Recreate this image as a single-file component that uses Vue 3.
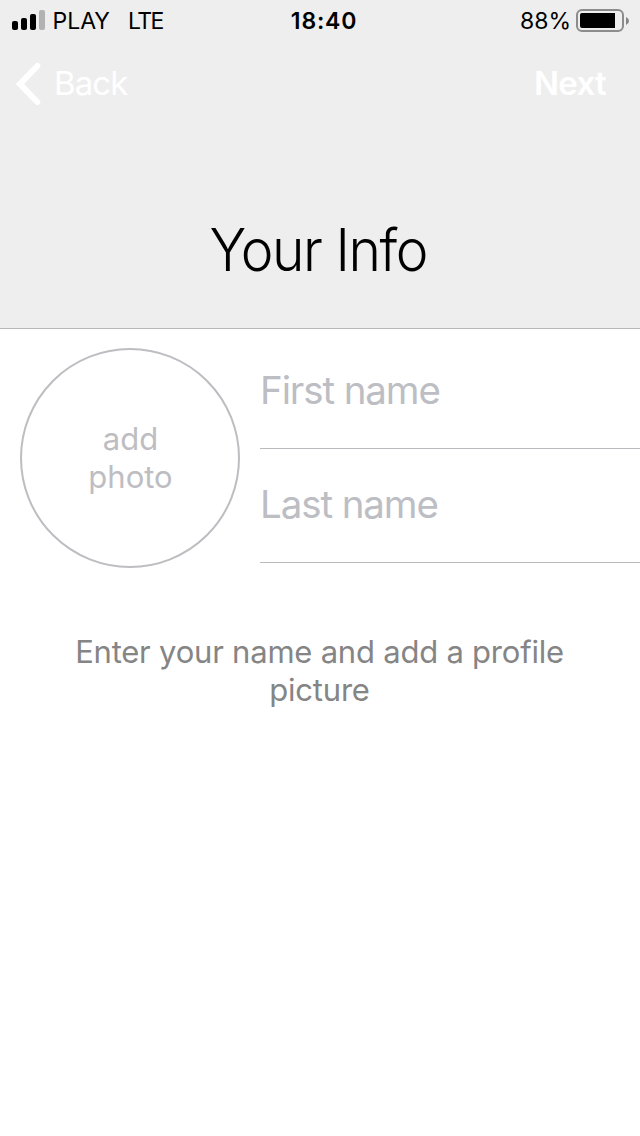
<script setup>
import { ref, computed } from "vue";

const firstName = ref("");
const lastName = ref("");
const battery = ref(88);

/* BATTERY */
const batteryWidth = computed(() => `${battery.value}%`);
</script>

<template>
  <div class="screen">
    <header class="header">
      <!-- STATUS BAR -->
      <div class="status">
        <div class="carrier">
          <svg class="signal" width="33" height="20" viewBox="0 0 33 20">
            <rect x="0" y="11" width="6" height="9" rx="2" />
            <rect x="9" y="8" width="6" height="12" rx="2" />
            <rect x="18" y="4" width="6" height="16" rx="2" />
            <rect x="27" y="0" width="6" height="20" rx="2" fill="#b2b2b2" />
          </svg>
          <span class="operator">PLAY</span>
          <span class="network">LTE</span>
        </div>
        <span class="time">18:40</span>
        <div class="power">
          <span class="percent">{{ battery }}%</span>
          <div class="battery">
            <div class="level" :style="{ width: batteryWidth }"></div>
          </div>
          <svg width="3" height="8" viewBox="0 0 3 8">
            <path d="M0 0Q3 1.3 3 4Q3 6.7 0 8Z" fill="#858585" />
          </svg>
        </div>
      </div>

      <!-- NAV -->
      <nav class="nav">
        <button class="back">
          <svg width="26" height="44" viewBox="0 0 26 44">
            <path d="M21.3 5L4 23L21.3 41" fill="none" stroke="#fff" stroke-width="6" stroke-linecap="round" stroke-linejoin="miter" />
          </svg>
          <span>Back</span>
        </button>
        <button class="next">Next</button>
      </nav>

      <h1 class="title">Your Info</h1>
    </header>

    <!-- FORM -->
    <form class="form" @submit.prevent>
      <button type="button" class="photo">add<br />photo</button>
      <div class="fields">
        <input v-model="firstName" class="first" placeholder="First name" />
        <input v-model="lastName" class="last" placeholder="Last name" />
      </div>
    </form>

    <p class="hint">Enter your name and add a profile picture</p>
  </div>
</template>

<style>
body {
  background: #fff;
}
</style>

<style scoped>
.screen {
  height: 1136px;
  overflow: hidden;
  background: #fff;
  color: #000;
  font-family: Inter, "Liberation Sans", sans-serif;
}

button,
input {
  padding: 0;
  border: none;
  background: none;
  font-family: inherit;
}

.header {
  box-sizing: border-box;
  height: 329px;
  background: #eeeeee;
  border-bottom: 1px solid #b8b8ba;
}

.status {
  display: grid;
  grid-template-columns: 1fr auto 1fr;
  align-items: center;
  height: 41px;
  padding: 0 11px 0 12px;
  font-size: 23px;
  line-height: 40px;
}

.status span {
  padding-top: 1px;
}

.signal {
  margin-bottom: 1px;
}

.carrier,
.power {
  display: flex;
  align-items: center;
  height: 41px;
}

.operator {
  margin-left: 7.5px;
}

.network {
  margin-left: 18px;
  letter-spacing: -1.6px;
}

.time {
  padding-left: 7px;
  font-weight: 600;
  letter-spacing: 0.8px;
}

.power {
  justify-content: flex-end;
}

.battery {
  box-sizing: border-box;
  width: 48px;
  height: 23px;
  margin: 0 2px 0 5px;
  padding: 2px;
  border: 2px solid #8c8c8c;
  border-radius: 6px;
}

.level {
  height: 100%;
  background: #000;
  border-radius: 2px 0 0 2px;
}

.nav {
  display: flex;
  align-items: center;
  justify-content: space-between;
  height: 84px;
  padding: 0 34px 0 16px;
}

.nav button {
  color: #fff;
  font-size: 33px;
}

.back {
  display: flex;
  align-items: center;
  gap: 12px;
  letter-spacing: -0.9px;
}

.nav .next {
  font-weight: 600;
  letter-spacing: -0.7px;
}

.title {
  margin: 84px 0 0;
  padding-right: 3.5px;
  font-size: 58.5px;
  font-weight: 300;
  letter-spacing: -1.5px;
  line-height: 81px;
  text-align: center;
  transform: scaleX(0.943);
}

.form {
  display: flex;
  gap: 20px;
  padding: 19px 0 0 20px;
}

.photo {
  width: 220px;
  height: 220px;
  padding-left: 1px;
  border: 2px solid #bdbdc2;
  border-radius: 50%;
  color: #bdbdc2;
  font-size: 31px;
  line-height: 38px;
}

.fields {
  display: flex;
  flex: 1;
  flex-direction: column;
  margin-top: -13px;
}

.fields input {
  box-sizing: border-box;
  width: 100%;
  height: 114px;
  padding-bottom: 3px;
  border-bottom: 1px solid #b9b9be;
  outline: none;
  font-size: 38.5px;
  letter-spacing: -1.1px;
}

.fields input::placeholder {
  color: #bdbdc4;
  opacity: 1;
}

.hint {
  margin: 65px 61px 0 60px;
  color: #858585;
  font-size: 31px;
  letter-spacing: -0.22px;
  line-height: 38px;
  text-align: center;
}
</style>
